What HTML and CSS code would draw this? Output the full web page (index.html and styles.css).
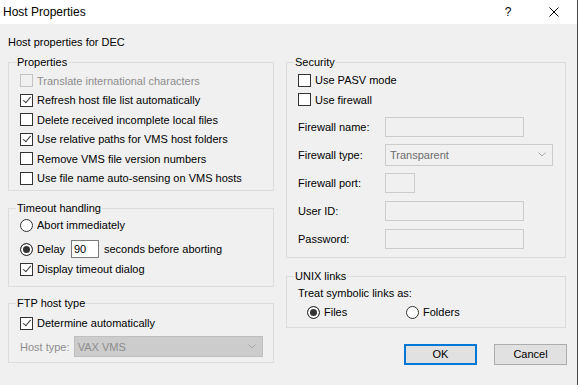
FILE: index.html
```html
<!DOCTYPE html>
<html lang="en">
<head>
    <meta charset="UTF-8">
    <meta name="viewport" content="width=device-width, initial-scale=1.0">
    <title>Host Properties</title>
    <link rel="stylesheet" href="styles.css">
</head>
<body>
    <div class="dialog">
        <div class="titlebar">
            <span class="title">Host Properties</span>
            <div class="caption-btns">
                <span class="cap-btn">?</span>
                <span class="cap-btn">
                    <svg width="10" height="10" viewBox="0 0 10 10"><path d="M0.5 0.5 L9.5 9.5 M9.5 0.5 L0.5 9.5" stroke="#000" stroke-width="1" fill="none"/></svg>
                </span>
            </div>
        </div>

        <div class="content">
            <p class="intro">Host properties for DEC</p>

            <div class="columns">
                <div class="col col-left">
                    <fieldset class="group group-props">
                        <legend>Properties</legend>
                        <label class="row disabled"><input type="checkbox" disabled>Translate international characters</label>
                        <label class="row"><input type="checkbox" checked>Refresh host file list automatically</label>
                        <label class="row"><input type="checkbox">Delete received incomplete local files</label>
                        <label class="row"><input type="checkbox" checked>Use relative paths for VMS host folders</label>
                        <label class="row"><input type="checkbox">Remove VMS file version numbers</label>
                        <label class="row"><input type="checkbox">Use file name auto-sensing on VMS hosts</label>
                    </fieldset>

                    <fieldset class="group group-timeout">
                        <legend>Timeout handling</legend>
                        <label class="row row-20"><input type="radio" name="timeout">Abort immediately</label>
                        <div class="row row-20 delay-row">
                            <input type="radio" name="timeout" id="delay" checked>
                            <label for="delay" class="delay-label">Delay</label>
                            <input type="text" class="delay-input" value="90">
                            <span class="delay-after">seconds before aborting</span>
                        </div>
                        <label class="row row-20"><input type="checkbox" checked>Display timeout dialog</label>
                    </fieldset>

                    <fieldset class="group group-ftp">
                        <legend>FTP host type</legend>
                        <label class="row row-20"><input type="checkbox" checked>Determine automatically</label>
                        <div class="row host-row">
                            <span class="host-label disabled">Host type:</span>
                            <div class="combo combo-host">
                                <span>VAX VMS</span>
                                <svg width="8" height="5" viewBox="0 0 8 5"><polyline points="0.5,0.5 4,4 7.5,0.5" stroke="#a8a8a8" stroke-width="1" fill="none"/></svg>
                            </div>
                        </div>
                    </fieldset>
                </div>

                <div class="col col-right">
                    <fieldset class="group group-security">
                        <legend>Security</legend>
                        <label class="row"><input type="checkbox">Use PASV mode</label>
                        <label class="row"><input type="checkbox">Use firewall</label>
                        <div class="fields">
                            <div class="field">
                                <label>Firewall name:</label>
                                <input type="text" class="textbox" disabled>
                            </div>
                            <div class="field">
                                <label>Firewall type:</label>
                                <div class="combo combo-type">
                                    <span>Transparent</span>
                                    <svg width="8" height="5" viewBox="0 0 8 5"><polyline points="0.5,0.5 4,4 7.5,0.5" stroke="#a8a8a8" stroke-width="1" fill="none"/></svg>
                                </div>
                            </div>
                            <div class="field">
                                <label>Firewall port:</label>
                                <input type="text" class="textbox textbox-port" disabled>
                            </div>
                            <div class="field">
                                <label>User ID:</label>
                                <input type="text" class="textbox" disabled>
                            </div>
                            <div class="field">
                                <label>Password:</label>
                                <input type="password" class="textbox" disabled>
                            </div>
                        </div>
                    </fieldset>

                    <fieldset class="group group-unix">
                        <legend>UNIX links</legend>
                        <div class="row row-19">Treat symbolic links as:</div>
                        <div class="row row-19 link-options">
                            <label class="option"><input type="radio" name="links" checked>Files</label>
                            <label class="option"><input type="radio" name="links">Folders</label>
                        </div>
                    </fieldset>

                    <div class="buttons">
                        <button class="btn btn-default">OK</button>
                        <button class="btn">Cancel</button>
                    </div>
                </div>
            </div>
        </div>
    </div>
</body>
</html>
```

FILE: styles.css
```css
* {
    box-sizing: border-box;
}

body {
    margin: 0;
    background-color: #f0f0f0;
    font-family: "Liberation Sans", Arial, sans-serif;
    font-size: 11px;
    color: #000;
}

.dialog {
    width: 578px;
    height: 385px;
    background-color: #f0f0f0;
    border-right: 1px solid #4a4a4a;
}

/* title bar */
.titlebar {
    height: 24px;
    background-color: #fff;
    display: flex;
    align-items: center;
    justify-content: space-between;
}

.title {
    font-size: 12px;
    padding-left: 3px;
}

.caption-btns {
    display: flex;
    height: 100%;
}

.cap-btn {
    width: 46px;
    display: flex;
    align-items: center;
    justify-content: center;
    font-size: 12px;
}

/* body */
.content {
    padding: 11.5px 0 0 8px;
}

.intro {
    margin: 0 0 7px;
    line-height: 13px;
}

.columns {
    display: flex;
    gap: 12px;
}

.col {
    display: flex;
    flex-direction: column;
}

.col-left {
    width: 266px;
}

.col-right {
    width: 280px;
}

/* group boxes */
.group {
    margin: 0;
    padding: 2px 10px 2px 11px;
    border: 1px solid #dcdcdc;
    min-width: 0;
}

.group legend {
    padding: 0 1px;
    margin-left: -4px;
    line-height: 13px;
}

.group-props {
    padding-top: 2.5px;
    padding-bottom: 1.5px;
}

.group-timeout {
    margin-top: 11px;
    padding-top: 0.5px;
    padding-bottom: 7px;
}

.group-ftp {
    margin-top: 9.5px;
    padding-top: 3.5px;
    padding-bottom: 5px;
}

.group-security {
    padding-bottom: 4px;
}

.group-unix {
    margin-top: 12px;
    padding-top: 1px;
    padding-bottom: 5px;
}

/* rows */
.row {
    height: 19.5px;
    display: flex;
    align-items: center;
    white-space: nowrap;
}

.row-19 {
    height: 19px;
}

.row-20 {
    height: 20px;
}

.disabled {
    color: #8d8d8d;
}

/* checkboxes and radios */
input[type="checkbox"],
input[type="radio"] {
    appearance: none;
    -webkit-appearance: none;
    width: 13px;
    height: 13px;
    margin: 0 4px 0 0;
    border: 1px solid #333;
    background-color: #fff;
    position: relative;
    flex: none;
}

input[type="checkbox"]:checked::after {
    content: "";
    position: absolute;
    left: 3.5px;
    top: 0.5px;
    width: 3px;
    height: 7px;
    border: solid #3a3a3a;
    border-width: 0 1.3px 1.3px 0;
    transform: rotate(40deg);
}

input[type="checkbox"]:disabled {
    border-color: #c4c4c4;
    background-color: transparent;
}

input[type="radio"] {
    border-radius: 50%;
}

input[type="radio"]:checked {
    background-color: #333;
    box-shadow: inset 0 0 0 2px #fff;
}

/* delay row */
.delay-row {
    margin-top: 4px;
}

.delay-label {
    width: 34px;
}

.delay-input {
    width: 28px;
    height: 18px;
    border: 1px solid #7a7a7a;
    background-color: #fff;
    padding: 0 0 0 2px;
    margin: 0;
    font: inherit;
    color: #000;
}

.delay-after {
    margin-left: 5px;
}

/* combos */
.combo {
    display: flex;
    align-items: center;
    justify-content: space-between;
    border: 1px solid #cccccc;
    background-color: #f0f0f0;
    color: #6d6d6d;
    padding: 0 6px 0 4px;
}

.combo-type {
    width: 168px;
    height: 22px;
}

.host-row {
    height: 21px;
    margin-top: 3px;
}

.host-label {
    width: 54px;
}

.combo-host {
    width: 190px;
    height: 21px;
    background-color: #cccccc;
    border-color: #bfbfbf;
    color: #8c8c8c;
    padding-left: 3px;
}

/* security fields */
.fields {
    margin-top: 3px;
}

.field {
    height: 28px;
    display: flex;
    align-items: center;
}

.field label {
    width: 87px;
}

.textbox {
    width: 139px;
    height: 20px;
    margin: 0;
    border: 1px solid #cccccc;
    background-color: #f0f0f0;
}

.textbox-port {
    width: 30px;
}

/* unix links */
.link-options {
    padding-left: 9px;
}

.option {
    width: 99px;
    display: flex;
    align-items: center;
}

/* buttons */
.buttons {
    display: flex;
    justify-content: flex-end;
    gap: 17px;
    margin-top: 16px;
    margin-right: -1px;
}

.btn {
    width: 73px;
    height: 21px;
    border: 1px solid #adadad;
    background-color: #e1e1e1;
    font: inherit;
    color: #000;
    padding: 0;
}

.btn-default {
    border: 2px solid #0078d7;
}
```
